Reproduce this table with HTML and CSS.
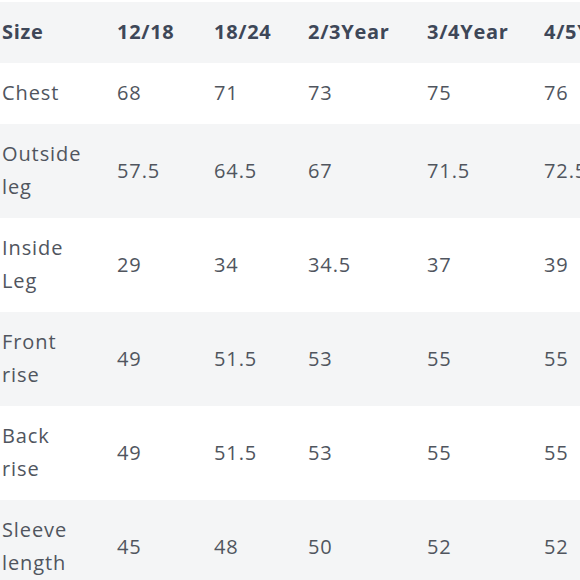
FILE: index.html
```html
<!DOCTYPE html>
<html>
<head>
<meta charset="utf-8">
<link rel="stylesheet" href="styles.css">
</head>
<body>
<div class="wrap">
<table class="sizes">
  <colgroup>
    <col class="c-label"><col class="c1"><col class="c2"><col class="c3"><col class="c4"><col class="c5">
  </colgroup>
  <thead>
    <tr class="alt"><th>Size</th><th>12/18</th><th>18/24</th><th>2/3Year</th><th>3/4Year</th><th>4/5Year</th></tr>
  </thead>
  <tbody>
    <tr><td>Chest</td><td>68</td><td>71</td><td>73</td><td>75</td><td>76</td></tr>
    <tr class="alt"><td>Outside<br>leg</td><td>57.5</td><td>64.5</td><td>67</td><td>71.5</td><td>72.5</td></tr>
    <tr><td>Inside<br>Leg</td><td>29</td><td>34</td><td>34.5</td><td>37</td><td>39</td></tr>
    <tr class="alt"><td>Front<br>rise</td><td>49</td><td>51.5</td><td>53</td><td>55</td><td>55</td></tr>
    <tr><td>Back<br>rise</td><td>49</td><td>51.5</td><td>53</td><td>55</td><td>55</td></tr>
    <tr class="alt"><td>Sleeve<br>length</td><td>45</td><td>48</td><td>50</td><td>52</td><td>52</td></tr>
  </tbody>
</table>
</div>
</body>
</html>
```
FILE: styles.css
```css
html, body {
  margin: 0;
  padding: 0;
  background: #ffffff;
  overflow: hidden;
}
.wrap {
  width: 580px;
  height: 580px;
  overflow: hidden;
  padding-top: 2px;
  box-sizing: border-box;
}
.sizes {
  border-collapse: collapse;
  table-layout: fixed;
  width: 664px;
  font-family: "Open Sans", "DejaVu Sans", sans-serif;
  font-size: 20px;
  line-height: 33px;
  letter-spacing: 0.9px;
  color: #50555e;
}
.c-label { width: 117px; }
.c1 { width: 97px; }
.c2 { width: 94px; }
.c3 { width: 119px; }
.c4 { width: 117px; }
.c5 { width: 120px; }
.sizes th, .sizes td {
  text-align: left;
  vertical-align: middle;
  padding: 13px 0 15px 0;
  white-space: nowrap;
}
.sizes th:first-child, .sizes td:first-child {
  padding-left: 2px;
}
.sizes th {
  font-weight: 700;
  letter-spacing: 0.7px;
  color: #3e4758;
}
.alt {
  background: #f4f5f6;
}
```
